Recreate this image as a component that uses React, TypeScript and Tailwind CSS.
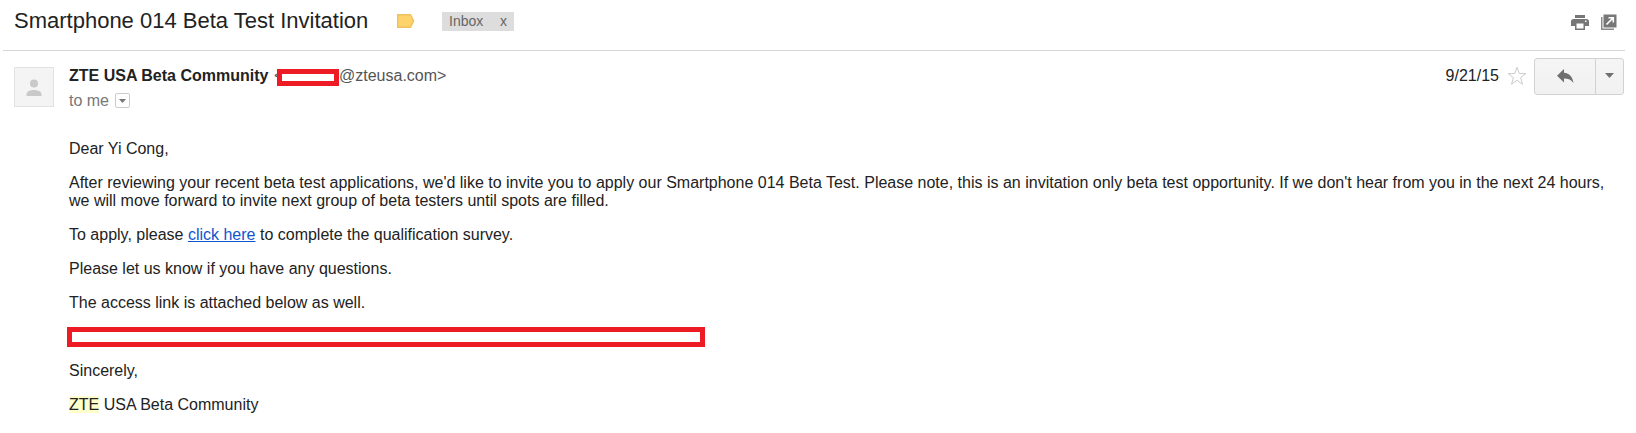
import type { ReactNode } from "react";

function Paragraph({ children }: { children: ReactNode }) {
  return <p className="mb-4 min-h-[18px]">{children}</p>;
}

function LabelIcon() {
  return (
    <svg width="18" height="14" viewBox="0 0 18 14" className="ml-[29px] mt-[14px] shrink-0">
      <path d="M.75.75H13.500L16.600 7 13.500 13.250H.75Z" fill="#ffd36b" stroke="#eec25f" strokeWidth="1.500" />
    </svg>
  );
}

function PrintIcon() {
  return (
    <svg width="18" height="16" viewBox="0 0 18 16" className="mt-[14px]">
      <path d="M4 1h10v3H4z" fill="#777" />
      <path
        fillRule="evenodd"
        d="M2.500 5h13A2.500 2.500 0 0 1 18 7.500V12h-4v4H4v-4H0V7.500A2.500 2.500 0 0 1 2.500 5ZM5.500 9.500v5h7v-5ZM14 6.500v1.500h1.500V6.500Z"
        fill="#777"
      />
    </svg>
  );
}

function PopOutIcon() {
  return (
    <svg width="16" height="16" viewBox="0 0 16 16" className="ml-[12px] mt-[14px]">
      <path d="M.75 3v12.250H13" fill="none" stroke="#8a8a8a" strokeWidth="1.500" />
      <path d="M2.500 .5h13V13.500h-13z" fill="#777" />
      <path d="M5.500 10.500 12 4M7.500 3.700h4.800v4.800" fill="none" stroke="#fff" strokeWidth="1.600" />
    </svg>
  );
}

function Avatar() {
  return (
    <div className="mt-[16px] ml-[14px] flex size-10 shrink-0 items-start border border-[#e2e2e2] bg-[#f4f4f4]">
      <svg width="38" height="38" viewBox="0 0 38 38">
        <circle cx="19" cy="15.500" r="4" fill="#c9c9c9" />
        <path d="M11.500 28v-1.700c0-3 4.500-4.300 7.500-4.300s7.500 1.300 7.500 4.300V28Z" fill="#c9c9c9" />
      </svg>
    </div>
  );
}

function Header() {
  return (
    <header className="ml-[3px] flex h-[51px] w-[1622px] items-start border-b border-b-[#d6d6d6] pl-[11px]">
      <h1 className="mt-[7px] w-[354px] whitespace-nowrap text-[22px] leading-[27px] text-[#222]">
        Smartphone 014 Beta Test Invitation
      </h1>
      <LabelIcon />
      <div className="ml-[27px] mt-[12px] flex h-[19px] w-[72px] items-center justify-between bg-[#ddd] pl-[7px] pr-[7px] text-[14px] leading-[19px] text-[#666]">
        <span>Inbox</span>
        <span>x</span>
      </div>
      <div className="ml-auto mr-[8px] flex">
        <PrintIcon />
        <PopOutIcon />
      </div>
    </header>
  );
}

function Sender() {
  return (
    <div className="ml-[15px] mt-[16px] text-[16px] leading-[18px]">
      <div className="flex h-[18px] items-start whitespace-nowrap text-[#555]">
        <span className="w-[205px] font-bold text-[#222]">ZTE USA Beta Community</span>
        <span className="w-[3px]">&lt;</span>
        <span className="relative mt-[2px] h-[17px] w-[62px] border-[5px] border-[#ed1c24] bg-white" />
        <span>@zteusa.com&gt;</span>
      </div>
      <div className="mt-[7px] flex items-start text-[#777]">
        <span className="w-[46px]">to me</span>
        <span className="mt-px flex h-[15px] w-[15px] items-center justify-center rounded-[2px] border border-[#ccc]">
          <svg width="7" height="4" viewBox="0 0 7 4">
            <path d="M0 0h7L3.500 4Z" fill="#777" />
          </svg>
        </span>
      </div>
    </div>
  );
}

function Actions() {
  return (
    <div className="ml-auto mr-[12px] flex items-start">
      <span className="mt-[16px] text-[16px] leading-[18px] text-[#222]">9/21/15</span>
      <svg width="20" height="20" viewBox="0 0 20 20" className="ml-[8px] mt-[15px]">
        <path
          d="M10 1.200 12.200 7.500 18.900 7.600 13.600 11.600 15.500 18.200 10 14.300 4.500 18.200 6.400 11.600 1.100 7.600 7.800 7.500Z"
          fill="#fff"
          stroke="#ccc"
        />
      </svg>
      <div className="ml-[7px] mt-[7px] flex h-[37px] w-[90px] rounded-[3px] border border-[#d2d2d2] bg-linear-to-b from-[#f5f5f5] to-[#f1f1f1]">
        <div className="flex w-[61px] items-start border-r border-r-[#d2d2d2]">
          <svg width="17" height="15" viewBox="0 0 17 15" className="ml-[22px] mt-[10px]">
            <path d="M7 0v3.800c5.500.400 8.500 4 9.500 10.200C14.300 11 11.500 9.600 7 9.600v3.900L0 6.700Z" fill="#707070" />
          </svg>
        </div>
        <div className="flex flex-1 items-start">
          <svg width="9" height="5" viewBox="0 0 9 5" className="ml-[9px] mt-[14px]">
            <path d="M0 0h9L4.500 5Z" fill="#707070" />
          </svg>
        </div>
      </div>
    </div>
  );
}

export default function App() {
  return (
    <main className="h-[433px] w-[1636px] overflow-hidden bg-white font-['Liberation_Sans',Arial,sans-serif]">
      <Header />
      <section className="flex h-[89px] items-start">
        <Avatar />
        <Sender />
        <Actions />
      </section>
      <article className="ml-[69px] w-[1552px] text-[16px] leading-[18px] text-[#222]">
        <Paragraph>Dear Yi Cong,</Paragraph>
        <Paragraph>
          After reviewing your recent beta test applications, we'd like to invite you to apply our Smartphone 014 Beta
          Test. Please note, this is an invitation only beta test opportunity. If we don't hear from you in the next 24
          hours, we will move forward to invite next group of beta testers until spots are filled.
        </Paragraph>
        <Paragraph>
          To apply, please{" "}
          <a href="#" className="text-[#1155cc] underline">
            click here
          </a>{" "}
          to complete the qualification survey.
        </Paragraph>
        <Paragraph>Please let us know if you have any questions.</Paragraph>
        <Paragraph>The access link is attached below as well.</Paragraph>
        <div className="-ml-[2px] mb-[15px] -mt-px h-[20px] w-[638px] border-[5px] border-[#ed1c24] bg-white" />
        <Paragraph>Sincerely,</Paragraph>
        <Paragraph>
          <span className="bg-[#ffffcc]">ZTE</span> USA Beta Community
        </Paragraph>
      </article>
    </main>
  );
}
